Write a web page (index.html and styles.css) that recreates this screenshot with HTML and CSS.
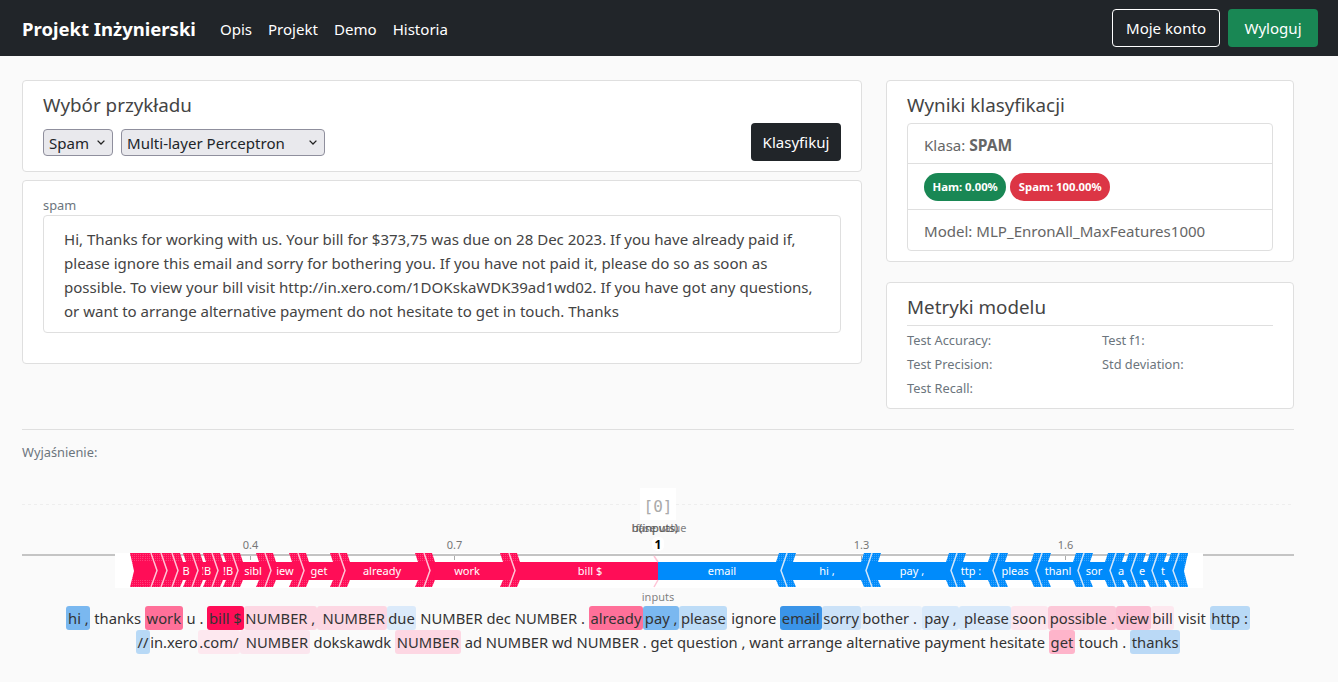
FILE: index.html
```html
<!DOCTYPE html>
<html lang="pl">
<head>
  <meta charset="UTF-8">
  <meta name="viewport" content="width=device-width, initial-scale=1.0">
  <title>Projekt Inżynierski</title>
  <link rel="stylesheet" href="styles.css">
</head>
<body>
  <nav class="navbar">
    <a class="brand" href="#">Projekt Inżynierski</a>
    <ul class="nav-links">
      <li><a href="#">Opis</a></li>
      <li><a href="#">Projekt</a></li>
      <li><a href="#">Demo</a></li>
      <li><a href="#">Historia</a></li>
    </ul>
    <div class="nav-actions">
      <button class="btn btn-outline">Moje konto</button>
      <button class="btn btn-green">Wyloguj</button>
    </div>
  </nav>

  <main class="page">
    <div class="columns">
      <section class="col-left">
        <div class="card card-pick">
          <h2 class="card-title">Wybór przykładu</h2>
          <div class="pick-row">
            <select class="pick pick-class">
              <option>Spam</option>
              <option>Ham</option>
            </select>
            <select class="pick pick-model">
              <option>Multi-layer Perceptron</option>
            </select>
            <button class="btn btn-dark">Klasyfikuj</button>
          </div>
        </div>
        <div class="card card-sample">
          <div class="small-label">spam</div>
          <div class="sample-text">Hi, Thanks for working with us. Your bill for $373,75 was due on 28 Dec 2023. If you have already paid if, please ignore this email and sorry for bothering you. If you have not paid it, please do so as soon as possible. To view your bill visit http://in.xero.com/1DOKskaWDK39ad1wd02. If you have got any questions, or want to arrange alternative payment do not hesitate to get in touch. Thanks</div>
        </div>
      </section>

      <section class="col-right">
        <div class="card card-results">
          <h2 class="card-title">Wyniki klasyfikacji</h2>
          <ul class="list-group">
            <li class="list-row">Klasa: <b>SPAM</b></li>
            <li class="list-row list-badges">
              <span class="badge badge-ham">Ham: 0.00%</span>
              <span class="badge badge-spam">Spam: 100.00%</span>
            </li>
            <li class="list-row">Model: MLP_EnronAll_MaxFeatures1000</li>
          </ul>
        </div>
        <div class="card card-metrics">
          <h2 class="card-title card-title-line">Metryki modelu</h2>
          <div class="metrics">
            <span>Test Accuracy:</span><span>Test f1:</span>
            <span>Test Precision:</span><span>Std deviation:</span>
            <span>Test Recall:</span>
          </div>
        </div>
      </section>
    </div>

    <hr class="divider">
    <div class="small-label explain-label">Wyjaśnienie:</div>

    <!-- force plot -->
    <svg class="force-plot" width="1272" height="130" viewBox="22 478 1272 130">
      <defs>
        <pattern id="hatch-r" width="2" height="2" patternUnits="userSpaceOnUse">
          <rect width="2" height="2" fill="#ff0d57"/>
          <rect width="1" height="1" fill="#ff3d7a"/>
        </pattern>
        <pattern id="hatch-b" width="2" height="2" patternUnits="userSpaceOnUse">
          <rect width="2" height="2" fill="#008bfb"/>
          <rect width="1" height="1" fill="#3aa3fb"/>
        </pattern>
        <g id="chev-r">
          <polygon points="-15,553 2,553 5,562 -12,562" fill="url(#hatch-r)"/>
          <polygon points="-15,587 2,587 5,580 -12,580" fill="url(#hatch-r)"/>
          <polygon points="-3,562 3,562 5,571 3,580 -3,580 0,571" fill="#ff0d57"/>
          <polyline points="-6,553 0,570.5 -6,587" fill="none" stroke="#ffc3d5" stroke-width="1.5"/>
        </g>
        <g id="chev-b">
          <polygon points="15,553 -2,553 -5,562 12,562" fill="url(#hatch-b)"/>
          <polygon points="15,587 -2,587 -5,580 12,580" fill="url(#hatch-b)"/>
          <polygon points="3,562 -3,562 -5,571 -3,580 3,580 0,571" fill="#008bfb"/>
          <polyline points="6,553 0,570.5 6,587" fill="none" stroke="#d1e6fa" stroke-width="1.5"/>
        </g>
      </defs>

      <line class="dash-line" x1="22" y1="504.5" x2="1294" y2="504.5"/>
      <line class="axis" x1="22" y1="555" x2="1294" y2="555"/>
      <rect x="115" y="553" width="1088" height="35" fill="#fff"/>
      <line class="axis" x1="130" y1="555" x2="1188" y2="555"/>
      <line class="tick" x1="250.5" y1="556" x2="250.5" y2="560"/>
      <line class="tick" x1="454.5" y1="556" x2="454.5" y2="560"/>
      <line class="tick" x1="861.5" y1="556" x2="861.5" y2="560"/>
      <line class="tick" x1="1065.5" y1="556" x2="1065.5" y2="560"/>

      <polygon points="130,553 147,553 147,587 130,587 134,571" fill="url(#hatch-r)"/>
      <polygon points="1188,553 1171,553 1171,587 1188,587 1184,571" fill="url(#hatch-b)"/>
      <polygon points="134,562 658,562 658,580 134,580" fill="#ff0d57"/>
      <polygon points="658,562 1184,562 1184,580 658,580" fill="#008bfb"/>

      <text class="force-label" x="186" y="575">B</text>
      <text class="force-label" x="206" y="575">!B</text>
      <text class="force-label" x="228" y="575">!B</text>
      <text class="force-label" x="253" y="575">sibl</text>
      <text class="force-label" x="285" y="575">iew</text>
      <text class="force-label" x="319" y="575">get</text>
      <text class="force-label" x="382" y="575">already</text>
      <text class="force-label" x="467" y="575">work</text>
      <text class="force-label" x="590" y="575">bill $</text>
      <text class="force-label" x="722" y="575">email</text>
      <text class="force-label" x="827" y="575">hi ,</text>
      <text class="force-label" x="912" y="575">pay ,</text>
      <text class="force-label" x="971" y="575">ttp :</text>
      <text class="force-label" x="1015" y="575">pleas</text>
      <text class="force-label" x="1058" y="575">thanl</text>
      <text class="force-label" x="1094" y="575">sor</text>
      <text class="force-label" x="1121" y="575">a</text>
      <text class="force-label" x="1142" y="575">e</text>
      <text class="force-label" x="1163" y="575">t</text>

      <use href="#chev-r" x="157"/>
      <use href="#chev-r" x="167"/>
      <use href="#chev-r" x="178"/>
      <use href="#chev-r" x="198"/>
      <use href="#chev-r" x="218"/>
      <use href="#chev-r" x="238"/>
      <use href="#chev-r" x="271"/>
      <use href="#chev-r" x="304"/>
      <use href="#chev-r" x="345"/>
      <use href="#chev-r" x="430"/>
      <use href="#chev-r" x="515"/>

      <use href="#chev-b" x="781"/>
      <use href="#chev-b" x="866"/>
      <use href="#chev-b" x="951"/>
      <use href="#chev-b" x="993"/>
      <use href="#chev-b" x="1036"/>
      <use href="#chev-b" x="1078"/>
      <use href="#chev-b" x="1110"/>
      <use href="#chev-b" x="1131"/>
      <use href="#chev-b" x="1152"/>
      <use href="#chev-b" x="1173"/>

      <polyline points="654,556 658,562" fill="none" stroke="#ffc3d5" stroke-width="1.5"/>
      <polyline points="658,580 654,587" fill="none" stroke="#ffc3d5" stroke-width="1.5"/>

      <text class="axis-label" x="250.5" y="549">0.4</text>
      <text class="axis-label" x="454.5" y="549">0.7</text>
      <text class="axis-label" x="861.5" y="549">1.3</text>
      <text class="axis-label" x="1065.5" y="549">1.6</text>
      <rect x="652" y="537" width="12" height="14" rx="5" fill="#fff"/>
      <text class="axis-value" x="658" y="549">1</text>

      <rect x="640" y="488" width="36" height="32" fill="#fff"/>
      <text class="output-name" x="658" y="512">[0]</text>
      <text class="base-label" x="659" y="532">base value</text>
      <text class="base-label" x="657" y="532">f(inputs)</text>
      <text class="base-label" x="655" y="532">b(inputs)</text>
      <text class="base-label" x="658" y="601">inputs</text>
    </svg>

    <p class="shap-text">
      <span style="background:#7ab8f0">hi ,</span> thanks <span style="background:#ff7099">work</span> u . <span style="background:#ff0d57">bill $</span><span style="background:#fdd7e3">NUMBER ,</span><span style="background:#fdd7e3">&nbsp;NUMBER</span><span style="background:#dbeafa">due</span> NUMBER dec NUMBER . <span style="background:#ff7099">already</span><span style="background:#7ab8f0">pay ,</span><span style="background:#bddcf7">please</span> ignore <span style="background:#3a94e8">email</span><span style="background:#cbe2f8">sorry</span><span style="background:#e8f1fb">bother .&nbsp;</span><span style="background:#d8e9fa">pay ,</span><span style="background:#d8e9fa">&nbsp;please</span><span style="background:#fde6ee">soon</span><span style="background:#fcc8d8">possible .</span><span style="background:#fcc0d4">view</span><span style="background:#fde8ef">bill</span> visit <span style="background:#b8d9f6">http :</span><br>
      <span style="background:#b8d9f6">//</span>in.xero<span style="background:#fde8ef">.com/</span><span style="background:#fbe6ee">&nbsp;NUMBER</span> dokskawdk <span style="background:#fdd7e3">NUMBER</span> ad NUMBER wd NUMBER . get question , want arrange alternative payment hesitate <span style="background:#feb4ca">get</span> touch . <span style="background:#bad9f6">thanks</span>
    </p>
  </main>
</body>
</html>
```

FILE: styles.css
```css
* {
  box-sizing: border-box;
}

body {
  margin: 0;
  font-family: "Noto Sans", "Open Sans", sans-serif;
  font-size: 15.05px;
  line-height: 24px;
  color: #212529;
  background-color: #fafafa;
  overflow: hidden;
}

.navbar {
  display: flex;
  align-items: center;
  height: 56px;
  padding: 2px 20px 0 22px;
  background-color: #212529;
}

.brand {
  margin-right: 24px;
  font-size: 18.5px;
  font-weight: 700;
  color: #fff;
  text-decoration: none;
}

.nav-links {
  display: flex;
  gap: 16px;
  margin: 0;
  padding: 0;
  list-style: none;
}

.nav-links a {
  color: #fff;
  text-decoration: none;
}

.nav-actions {
  display: flex;
  gap: 8px;
  margin-left: auto;
  margin-top: -2px;
}

.btn {
  height: 38px;
  padding: 0 13px;
  border: 1px solid transparent;
  border-radius: 4px;
  font-family: inherit;
  font-size: 15.05px;
  color: #fff;
  cursor: pointer;
}

.btn-outline {
  background: transparent;
  border-color: #fff;
}

.btn-green {
  width: 90px;
  padding: 0;
  background-color: #198754;
}

.btn-dark {
  width: 90px;
  padding: 0;
  margin-left: auto;
  background-color: #212529;
}

.page {
  padding: 24px 44px 0 22px;
}

.columns {
  display: grid;
  grid-template-columns: 840px 408px;
  gap: 24px;
}

.col-left,
.col-right {
  display: flex;
  flex-direction: column;
}

.col-left {
  gap: 8px;
}

.col-right {
  gap: 20px;
}

.card {
  padding: 11px 20px 0;
  background-color: #fff;
  border: 1px solid #dfdfdf;
  border-radius: 4px;
}

.card-title {
  margin: 0;
  font-size: 18.8px;
  font-weight: 400;
  line-height: 26px;
  color: #444;
}

.card-pick {
  height: 92px;
}

.pick-row {
  display: flex;
  align-items: flex-start;
  gap: 8px;
  margin-top: 5px;
}

.pick {
  height: 27px;
  margin-top: 6px;
  padding: 0 20px 0 5px;
  appearance: none;
  background-color: #e9e9ed;
  background-image: url("data:image/svg+xml;utf8,<svg xmlns='http://www.w3.org/2000/svg' width='8' height='5'><path d='M.6 .6l3.4 3.4 3.4-3.4' fill='none' stroke='%23222' stroke-width='1.3'/></svg>");
  background-repeat: no-repeat;
  background-position: right 7px center;
  border: 1px solid #8f8f9d;
  border-radius: 4px;
  font-family: inherit;
  font-size: 15.05px;
  color: #212529;
}

.pick-class {
  width: 70px;
}

.pick-model {
  width: 204px;
}

.card-sample {
  height: 184px;
  padding-top: 14px;
}

.small-label {
  font-size: 12.8px;
  line-height: 20px;
  color: #6c757d;
}

.sample-text {
  height: 118px;
  padding: 11px 20px;
  background-color: #fff;
  border: 1px solid #dfdfdf;
  border-radius: 4px;
  color: #444;
}

.card-results {
  height: 182px;
}

.list-group {
  margin: 5px 0 0;
  padding: 0;
  list-style: none;
  border: 1px solid #dfdfdf;
  border-radius: 4px;
}

.list-row {
  padding: 9px 16px 0;
  height: 39px;
  color: #666;
}

.list-row b {
  font-size: 15.6px;
}

.list-row + .list-row {
  border-top: 1px solid #dfdfdf;
  height: 41px;
}

.list-row.list-badges {
  display: flex;
  gap: 4px;
  height: 46px;
}

.badge {
  height: 28px;
  padding: 0 8.5px;
  border-radius: 14px;
  font-size: 11.3px;
  font-weight: 700;
  line-height: 28px;
  color: #fff;
}

.badge-ham {
  background-color: #198754;
}

.badge-spam {
  background-color: #dc3545;
}

.card-metrics {
  height: 127px;
}

.card-title-line {
  padding-bottom: 5px;
  border-bottom: 1px solid #dfdfdf;
}

.metrics {
  display: grid;
  grid-template-columns: 195px 1fr;
  margin-top: 2px;
  font-size: 12.8px;
  color: #6c757d;
}

.divider {
  margin: 20px 0 0;
  border: 0;
  border-top: 1px solid #dfdfdf;
}

.explain-label {
  margin-top: 12px;
}

.force-plot {
  display: block;
  margin-top: 16px;
}

.dash-line {
  stroke: #eee;
  stroke-dasharray: 3 3;
}

.axis {
  stroke: #c4c4c4;
  stroke-width: 2;
}

.tick {
  stroke: #aaa;
}

.force-label {
  font-size: 11px;
  fill: #fff;
  text-anchor: middle;
}

.axis-label {
  font-size: 11px;
  fill: #777;
  text-anchor: middle;
}

.axis-value {
  font-size: 12px;
  font-weight: 700;
  fill: #000;
  text-anchor: middle;
}

.output-name {
  font-family: "DejaVu Sans Mono", monospace;
  font-size: 16px;
  fill: #aaa;
  text-anchor: middle;
}

.base-label {
  font-size: 11px;
  fill: #555;
  fill-opacity: 0.75;
  text-anchor: middle;
}

.shap-text {
  width: 1272px;
  margin: -2px 0 0;
  font-size: 14.75px;
  text-align: center;
  color: #333;
}

.shap-text span {
  padding: 2px 1.7px;
  border-radius: 3px;
}
```
